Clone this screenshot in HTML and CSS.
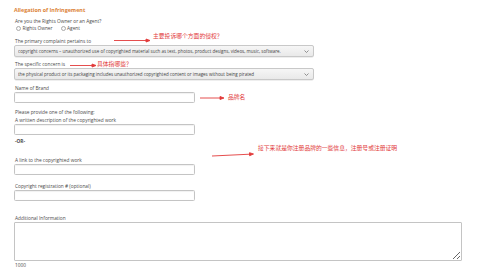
FILE: index.html
```html
<!DOCTYPE html>
<html lang="en">
<head>
  <meta charset="UTF-8">
  <meta name="viewport" content="width=device-width, initial-scale=1.0">
  <title>Allegation of Infringement</title>
  <link rel="stylesheet" href="styles.css">
</head>
<body>
  <form class="claim">
    <h1 class="claim-title">Allegation of Infringement</h1>

    <div class="field f-owner">
      <label>Are you the Rights Owner or an Agent?</label>
      <div class="radios">
        <label class="radio"><input type="radio" name="role"> Rights Owner</label>
        <label class="radio"><input type="radio" name="role"> Agent</label>
      </div>
    </div>

    <div class="field f-primary">
      <label for="primary">The primary complaint pertains to</label>
      <div class="select-wrap wide">
        <select id="primary">
          <option>copyright concerns – unauthorized use of copyrighted material such as text, photos, product designs, videos, music, software.</option>
        </select>
        <svg class="chevron" width="5" height="3" viewBox="0 0 5 3"><path d="M0.5 0.5 L2.5 2.5 L4.5 0.5" fill="none" stroke="#777" stroke-width="0.8"/></svg>
      </div>
    </div>

    <div class="field f-specific">
      <label for="specific">The specific concern is</label>
      <div class="select-wrap wide">
        <select id="specific">
          <option>the physical product or its packaging includes unauthorized copyrighted content or images without being pirated</option>
        </select>
        <svg class="chevron" width="5" height="3" viewBox="0 0 5 3"><path d="M0.5 0.5 L2.5 2.5 L4.5 0.5" fill="none" stroke="#777" stroke-width="0.8"/></svg>
      </div>
    </div>

    <div class="field f-brand">
      <label for="brand">Name of Brand</label>
      <input type="text" id="brand" class="text">
    </div>

    <p class="note f-please">Please provide one of the following:</p>
    <div class="field f-written">
      <label for="written">A written description of the copyrighted work</label>
      <input type="text" id="written" class="text">
    </div>

    <p class="note or f-or">-OR-</p>

    <div class="field f-link">
      <label for="link">A link to the copyrighted work</label>
      <input type="text" id="link" class="text">
    </div>

    <div class="field f-reg">
      <label for="reg">Copyright registration # (optional)</label>
      <input type="text" id="reg" class="text">
    </div>

    <div class="field f-info">
      <label for="info">Additional Information</label>
      <textarea id="info"></textarea>
      <div class="counter">1000</div>
    </div>
  </form>

  <!-- annotations drawn over the form -->
  <svg class="arrows" width="499" height="271" viewBox="0 0 499 271">
    <g stroke="#e23a3a" stroke-width="0.9" fill="#e23a3a">
      <line x1="114" y1="40.5" x2="147" y2="40.5"/>
      <path d="M150 40.5 L146 39 L146 42 Z"/>
      <line x1="70" y1="65.5" x2="93" y2="65.5"/>
      <path d="M96 65.5 L92 64 L92 67 Z"/>
      <line x1="200" y1="98" x2="221" y2="98"/>
      <path d="M224 98 L220 96.5 L220 99.5 Z"/>
      <line x1="212" y1="156" x2="250" y2="154.2"/>
      <path d="M253.5 154 L249.5 152.7 L249.6 155.7 Z"/>
    </g>
  </svg>
  <span class="note-cn n1">主要投诉哪个方面的侵权？</span>
  <span class="note-cn n2">具体指哪些？</span>
  <span class="note-cn n3">品牌名</span>
  <span class="note-cn n4">接下来就是你注册品牌的一些信息，注册号或注册证明</span>
</body>
</html>
```

FILE: styles.css
```css
body {
  margin: 0;
  font-family: "Open Sans", "Liberation Sans", Arial, sans-serif;
  font-size: 4.8px;
  color: #4a4a4a;
  background: #fff;
  position: relative;
  width: 499px;
  height: 271px;
  overflow: hidden;
}
.claim {
  padding: 6px 0 0 14px;
}
.claim-title {
  margin: 0;
  font-size: 5.4px;
  line-height: 8px;
  font-weight: bold;
  color: #dc8236;
}
.field label,
.note {
  display: block;
  line-height: 6px;
  margin: 0 0 1px 1px;
}
.note {
  margin-bottom: 0;
}
.or {
  font-weight: bold;
}
.radios {
  display: flex;
  gap: 8px;
  margin-left: 2px;
}
.radio {
  display: flex !important;
  align-items: center;
  gap: 1.5px;
  margin: 0 !important;
}
.radio input {
  appearance: none;
  width: 5px;
  height: 5px;
  margin: 0;
  border: 0.6px solid #aaa;
  border-radius: 50%;
  background: #fafafa;
}
.select-wrap {
  position: relative;
  width: 300px;
}
.select-wrap select {
  appearance: none;
  width: 100%;
  height: 12px;
  margin: 0;
  padding: 0 8px 0 3px;
  font-family: inherit;
  font-size: 4.5px;
  color: #444;
  border: 0.8px solid #c8c8c8;
  border-radius: 2px;
  background: linear-gradient(#f6f6f6, #e9e9e9);
  box-shadow: 0 0.5px 0 #ddd;
}
.chevron {
  position: absolute;
  right: 5px;
  top: 4.5px;
}
.text {
  display: block;
  width: 181px;
  height: 11px;
  margin: 0;
  padding: 0;
  box-sizing: border-box;
  border: 0.8px solid #c4c4c4;
  border-radius: 1.5px;
  box-shadow: inset 0 0.5px 1px #e6e6e6;
  background: #fff;
}
textarea {
  display: block;
  width: 448px;
  height: 39px;
  margin: 0;
  padding: 0;
  box-sizing: border-box;
  border: 0.8px solid #c4c4c4;
  border-radius: 1px;
  background: #fff;
}
.counter {
  line-height: 6px;
  margin: 1px 0 0 1px;
}

.f-owner { margin-top: 4px; }
.f-primary { margin-top: 7px; }
.f-specific { margin-top: 4px; }
.f-brand { margin-top: 5px; }
.f-please { margin-top: 6px; margin-bottom: 2px; }
.f-or { margin-top: 3px; }
.f-link { margin-top: 13px; }
.f-reg { margin-top: 8px; }
.f-info { margin-top: 14px; }

.arrows {
  position: absolute;
  left: 0;
  top: 0;
  pointer-events: none;
}
.note-cn {
  position: absolute;
  font-family: "Noto Sans CJK SC", sans-serif;
  font-size: 5.8px;
  line-height: 8px;
  color: #e23a3a;
  white-space: nowrap;
}
.n1 { left: 153px; top: 32px; }
.n2 { left: 97px; top: 60px; }
.n3 { left: 228px; top: 93px; }
.n4 { left: 258px; top: 144px; }
```
